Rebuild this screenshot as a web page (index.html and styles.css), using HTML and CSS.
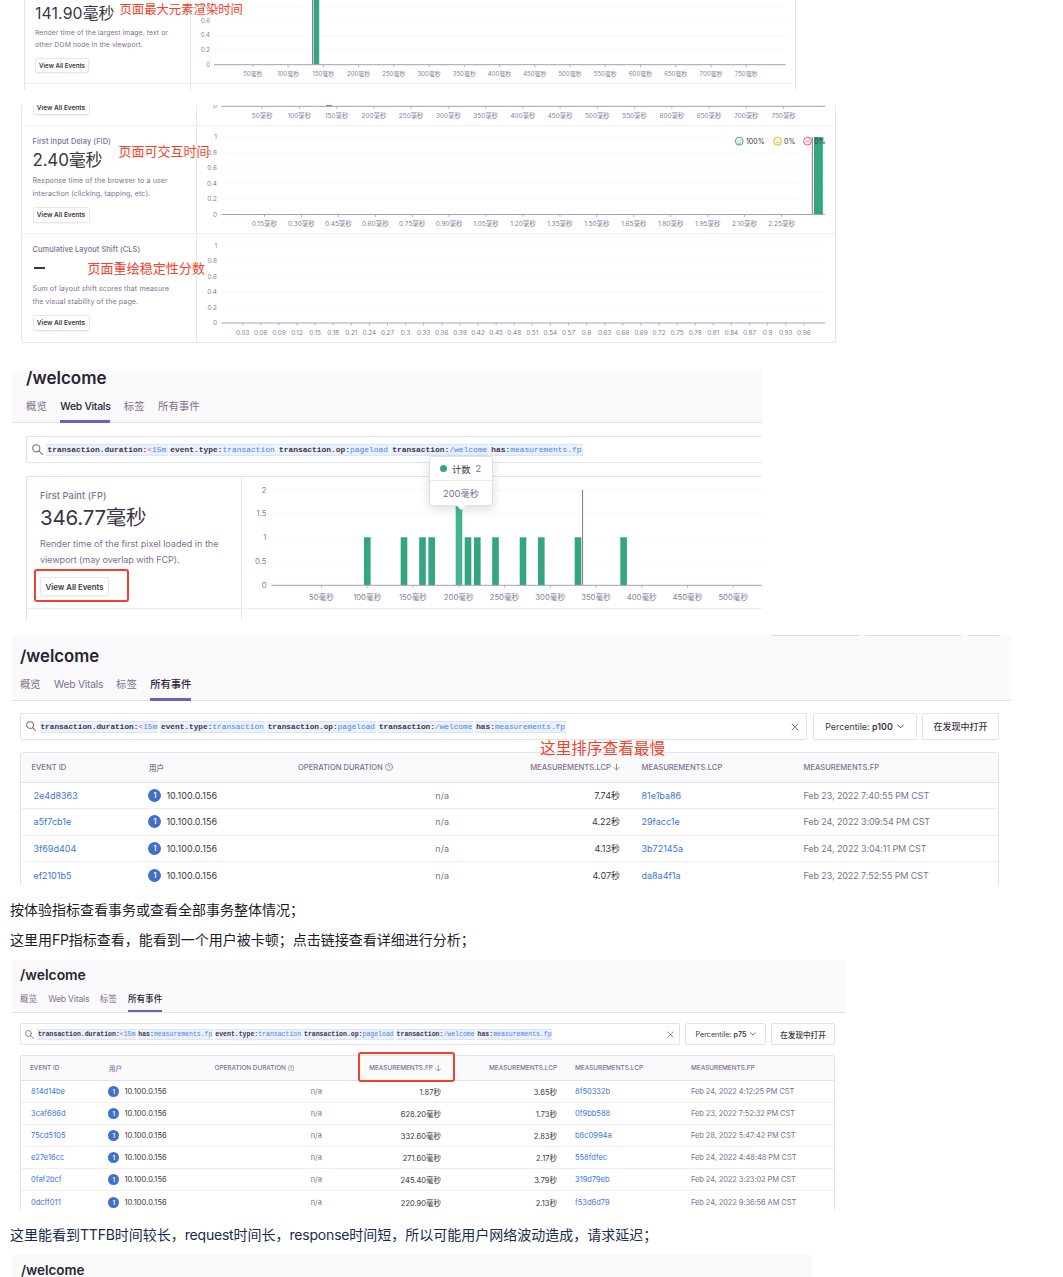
FILE: index.html
```html
<!DOCTYPE html>
<html lang="zh-CN">
<head>
<meta charset="utf-8">
<title>/welcome</title>
<link rel="stylesheet" href="styles.css">
</head>
<body>
<svg class="defs" width="0" height="0">
  <symbol id="search" viewBox="0 0 16 16"><g fill="none" stroke="currentColor" stroke-width="1.6" stroke-linecap="round"><circle cx="6.2" cy="6.2" r="5.2"/><path d="M10 10l5.2 5.2"/></g></symbol>
  <symbol id="close" viewBox="0 0 16 16"><path d="M2 2l12 12M14 2L2 14" fill="none" stroke="currentColor" stroke-width="1.8" stroke-linecap="round"/></symbol>
  <symbol id="chevron" viewBox="0 0 16 16"><path d="M1.5 4.5L8 11l6.500-6.500" fill="none" stroke="currentColor" stroke-width="2" stroke-linecap="round" stroke-linejoin="round"/></symbol>
  <symbol id="down" viewBox="0 0 16 16"><path d="M8 1v14M2 9l6 6 6-6" fill="none" stroke="currentColor" stroke-width="1.800" stroke-linecap="round" stroke-linejoin="round"/></symbol>
  <symbol id="help" viewBox="0 0 16 16"><g fill="none" stroke="currentColor" stroke-width="1.300" stroke-linecap="round"><circle cx="8" cy="8" r="7.200"/><path d="M5.700 6.300a2.300 2.300 0 1 1 3.200 2.200c-.700.300-.900.600-.900 1.300M8 11.800v.300"/></g></symbol>
</svg>

<figure class="shot lcp">
  <div class="row">
    <div class="vital">
      <div class="value">141.90毫秒</div>
      <p class="desc">Render time of the largest image, text or<br>other DOM node in the viewport.</p>
      <span class="btn">View All Events</span>
    </div>
    <svg class="chart" data-chart="lcp" viewBox="191 0 604 83"></svg>
  </div>
  <div class="row stub"><div class="vital"></div></div>
  <div class="note note-lcp">页面最大元素渲染时间</div>
</figure>

<figure class="shot fid">
  <div class="row cut">
    <div class="vital"><span class="btn">View All Events</span></div>
    <svg class="chart" data-chart="cut" viewBox="197 105 638 20"></svg>
  </div>
  <div class="row">
    <div class="vital">
      <div class="title">First Input Delay (FID)</div>
      <div class="value">2.40毫秒</div>
      <p class="desc">Response time of the browser to a user<br>interaction (clicking, tapping, etc).</p>
      <span class="btn">View All Events</span>
    </div>
    <svg class="chart" data-chart="fid" viewBox="197 126 638 107"></svg>
  </div>
  <div class="row last">
    <div class="vital">
      <div class="title">Cumulative Layout Shift (CLS)</div>
      <div class="value"><i class="dash"></i></div>
      <p class="desc">Sum of layout shift scores that measure<br>the visual stability of the page.</p>
      <span class="btn">View All Events</span>
    </div>
    <svg class="chart" data-chart="cls" viewBox="197 234 638 107"></svg>
  </div>
  <div class="note note-fid">页面可交互时间</div>
  <div class="note note-cls">页面重绘稳定性分数</div>
</figure>

<figure class="shot page fp">
  <header>
    <h1>/welcome</h1>
    <nav><span>概览</span><span class="on wv">Web Vitals</span><span>标签</span><span>所有事件</span></nav>
  </header>
  <div class="search"><svg class="mag"><use href="#search"/></svg><div class="query"><span><b>transaction.duration:</b><em>&lt;</em>15m</span><span><b>event.type:</b>transaction</span><span><b>transaction.op:</b>pageload</span><span><b>transaction:</b>/welcome</span><span><b>has:</b>measurements.fp</span></div></div>
  <div class="panel">
    <div class="row">
      <div class="vital">
        <div class="title">First Paint (FP)</div>
        <div class="value">346.77毫秒</div>
        <p class="desc">Render time of the first pixel loaded in the<br><span class="tight">viewport (may overlap with FCP).</span></p>
        <span class="btn">View All Events</span>
      </div>
      <svg class="chart" data-chart="fp" viewBox="242 477 520 131"></svg>
    </div>
    <div class="row stub"><div class="vital"></div></div>
  </div>
  <div class="mark mark-btn"></div>
  <div class="tooltip"><div class="tip-row"><i></i><strong>计数</strong><span>2</span></div><div class="tip-foot">200毫秒</div></div>
</figure>

<figure class="shot page events">
  <div class="cut-buttons"><i></i><i></i><i></i></div>
  <header>
    <h1>/welcome</h1>
    <nav><span>概览</span><span class="wv">Web Vitals</span><span>标签</span><span class="on">所有事件</span></nav>
  </header>
  <div class="bar">
    <div class="search"><svg class="mag"><use href="#search"/></svg><div class="query"><span><b>transaction.duration:</b><em>&lt;</em>15m</span><span><b>event.type:</b>transaction</span><span><b>transaction.op:</b>pageload</span><span><b>transaction:</b>/welcome</span><span><b>has:</b>measurements.fp</span></div><svg class="x"><use href="#close"/></svg></div>
    <div class="pick"><span class="lbl">Percentile: <b>p100</b></span><svg><use href="#chevron"/></svg></div>
    <div class="pick open">在发现中打开</div>
  </div>
  <div class="table">
    <div class="tr th"><span>EVENT ID</span><span>用户</span><span>OPERATION DURATION <svg><use href="#help"/></svg></span><span class="r">MEASUREMENTS.LCP <svg class="arrow"><use href="#down"/></svg></span><span>MEASUREMENTS.LCP</span><span>MEASUREMENTS.FP</span></div>
    <div class="tr"><a>2e4d8363</a><span class="user"><i>1</i>10.100.0.156</span><span class="r na">n/a</span><span class="r">7.74秒</span><a>81e1ba86</a><time>Feb 23, 2022 7:40:55 PM CST</time></div>
    <div class="tr"><a>a5f7cb1e</a><span class="user"><i>1</i>10.100.0.156</span><span class="r na">n/a</span><span class="r">4.22秒</span><a>29facc1e</a><time>Feb 24, 2022 3:09:54 PM CST</time></div>
    <div class="tr"><a>3f69d404</a><span class="user"><i>1</i>10.100.0.156</span><span class="r na">n/a</span><span class="r">4.13秒</span><a>3b72145a</a><time>Feb 24, 2022 3:04:11 PM CST</time></div>
    <div class="tr"><a>ef2101b5</a><span class="user"><i>1</i>10.100.0.156</span><span class="r na">n/a</span><span class="r">4.07秒</span><a>da8a4f1a</a><time>Feb 23, 2022 7:52:55 PM CST</time></div>
  </div>
  <div class="note note-sort">这里排序查看最慢</div>
</figure>

<p class="text">按体验指标查看事务或查看全部事务整体情况；</p>
<p class="text">这里用<span>FP</span>指标查看，能看到一个用户被卡顿；点击链接查看详细进行分析；</p>

<figure class="shot page events small">
  <header>
    <h1>/welcome</h1>
    <nav><span>概览</span><span class="wv">Web Vitals</span><span>标签</span><span class="on">所有事件</span></nav>
  </header>
  <div class="bar">
    <div class="search"><svg class="mag"><use href="#search"/></svg><div class="query"><span><b>transaction.duration:</b><em>&lt;</em>15m</span><span><b>has:</b>measurements.fp</span><span><b>event.type:</b>transaction</span><span><b>transaction.op:</b>pageload</span><span><b>transaction:</b>/welcome</span><span><b>has:</b>measurements.fp</span></div><svg class="x"><use href="#close"/></svg></div>
    <div class="pick"><span class="lbl">Percentile: <b>p75</b></span><svg><use href="#chevron"/></svg></div>
    <div class="pick open">在发现中打开</div>
  </div>
  <div class="table">
    <div class="tr th"><span>EVENT ID</span><span>用户</span><span>OPERATION DURATION <svg><use href="#help"/></svg></span><span class="r">MEASUREMENTS.FP <svg class="arrow"><use href="#down"/></svg></span><span class="r">MEASUREMENTS.LCP</span><span>MEASUREMENTS.LCP</span><span>MEASUREMENTS.FP</span></div>
    <div class="tr"><a>814d14be</a><span class="user"><i>1</i>10.100.0.156</span><span class="r na">n/a</span><span class="r">1.87秒</span><span class="r">3.65秒</span><a>8f50332b</a><time>Feb 24, 2022 4:12:25 PM CST</time></div>
    <div class="tr"><a>3caf686d</a><span class="user"><i>1</i>10.100.0.156</span><span class="r na">n/a</span><span class="r">628.20毫秒</span><span class="r">1.73秒</span><a>0f9bb588</a><time>Feb 23, 2022 7:52:32 PM CST</time></div>
    <div class="tr"><a>75cd5105</a><span class="user"><i>1</i>10.100.0.156</span><span class="r na">n/a</span><span class="r">332.60毫秒</span><span class="r">2.83秒</span><a>b8c0994a</a><time>Feb 28, 2022 5:47:42 PM CST</time></div>
    <div class="tr"><a>e27e16cc</a><span class="user"><i>1</i>10.100.0.156</span><span class="r na">n/a</span><span class="r">271.60毫秒</span><span class="r">2.17秒</span><a>558fdfec</a><time>Feb 24, 2022 4:48:48 PM CST</time></div>
    <div class="tr"><a>0faf2bcf</a><span class="user"><i>1</i>10.100.0.156</span><span class="r na">n/a</span><span class="r">245.40毫秒</span><span class="r">3.79秒</span><a>319d79eb</a><time>Feb 24, 2022 3:23:02 PM CST</time></div>
    <div class="tr"><a>0dcff011</a><span class="user"><i>1</i>10.100.0.156</span><span class="r na">n/a</span><span class="r">220.90毫秒</span><span class="r">2.13秒</span><a>f53d6d79</a><time>Feb 24, 2022 9:36:56 AM CST</time></div>
  </div>
  <div class="mark mark-fp"></div>
</figure>

<p class="text navy">这里能看到<span>TTFB</span>时间较长，<span>request</span>时间长，<span>response</span>时间短，所以可能用户网络波动造成，请求延迟；</p>

<figure class="shot page tail"><header><h1>/welcome</h1></header></figure>
<script src="charts.js"></script>
</body>
</html>
```
FILE: styles.css
```css
* { box-sizing: border-box; }
body { margin: 0; width: 1063px; height: 1277px; overflow: hidden; background: #fff; color: #2b2233; font-family: Inter, "Noto Sans CJK SC", sans-serif; }
.defs { position: absolute; }
p, h1, figure { margin: 0; }
.shot { position: relative; overflow: hidden; }
.row { display: flex; border-bottom: 1px solid #efedf3; }
.vital { flex: none; border-right: 1px solid #e8e5ee; color: #80708f; white-space: nowrap; }
.chart { flex: none; display: block; overflow: hidden; }
.chart text { fill: #8b7b9b; font-family: Inter, "Noto Sans CJK SC", sans-serif; }
.value { color: #3e3446; }
.title { font-weight: 500; line-height: 10px; }
.btn { display: flex; align-items: center; justify-content: center; color: #3e3446; font-weight: 600; border: 1px solid #e8e5ee; border-radius: 2px; box-shadow: 0 1px 1px rgba(40, 30, 50, .04); }
.note { position: absolute; color: #f4412c; white-space: nowrap; line-height: 20px; }
.mark { position: absolute; border: 2px solid #f0412c; border-radius: 3px; }

.lcp { margin-left: 24px; width: 772px; height: 90px; border: solid #e8e5ee; border-width: 0 1px; }
.lcp .row { height: 84px; }
.lcp .vital { width: 166px; padding: 4px 0 0 10px; }
.lcp .value { font-size: 15.8px; line-height: 20px; letter-spacing: .12px; }
.lcp .desc { font-size: 6.8px; line-height: 12px; margin: 3px 0 7px; letter-spacing: .1px; }
.lcp .btn { width: 54px; height: 15px; font-size: 6.2px; }
.lcp .chart { width: 604px; height: 83px; }
.note-lcp { left: 94.5px; top: 0; font-size: 12.35px; }

.fid { margin: 15px 0 0 21px; width: 815px; height: 238px; border: solid #e8e5ee; border-width: 0 1px 1px; border-radius: 0 0 3px 3px; }
.fid .vital { width: 175px; padding: 11px 0 0 10.5px; }
.fid .row { height: 108px; }
.fid .row.cut { height: 21px; }
.fid .row.last { border: 0; }
.fid .cut .vital { padding-top: 0; }
.fid .cut .btn { margin-top: -6px; padding-top: 1px; }
.fid .title { font-size: 7.4px; letter-spacing: .08px; }
.fid .value { font-size: 17px; line-height: 20px; margin-top: 3px; letter-spacing: -.2px; }
.fid .desc { font-size: 7.1px; line-height: 13px; margin: 4px 0 7px; letter-spacing: .1px; }
.fid .btn { width: 57px; height: 16px; font-size: 6.5px; }
.fid .chart { width: 638px; height: 107px; }
.fid .cut .chart { height: 20px; }
.dash { display: inline-block; width: 11px; height: 2px; margin-left: 1px; background: #3e3446; vertical-align: 5px; }
.note-fid { left: 96.5px; top: 36px; font-size: 13px; }
.note-cls { left: 65.5px; top: 152.500px; font-size: 13.05px; }

.page { margin-left: 12px; }
.page header { background: #faf9fb; border-bottom: 1px solid #e5e1ea; }
.page h1 { font-weight: 600; white-space: nowrap; }
.page nav { display: flex; color: #80708f; white-space: nowrap; }
.page nav .on { color: #2b2233; font-weight: 500; border-bottom: 3px solid #6c5fc7; }
.search { display: flex; align-items: center; border: 1px solid #e5e1ea; border-radius: 2px; }
.mag, .x { flex: none; color: #80708f; }
.query { display: flex; font-family: "Liberation Mono", monospace; color: #4a83e8; white-space: pre; }
.query span { background: #eaf1fd; border: solid #d9e4f8; border-width: 1px 0; }
.query b { color: #3e3446; }
.query em { color: #f0427c; font-style: normal; }

.fp { margin-top: 27px; width: 750px; height: 250px; }
.fp header { display: flow-root; height: 53px; padding-left: 14px; }
.fp h1 { font-size: 17px; line-height: 22px; margin-top: -3px; }
.fp nav { font-size: 10.4px; line-height: 20px; gap: 13.5px; padding-top: 8px; }
.fp nav span { height: 26px; }
.fp nav .wv { letter-spacing: -.27px; width: 50px; }
.fp .search { margin: 13px 0 0 14px; height: 27px; border-right: 0; padding-left: 4.5px; }
.fp .mag { width: 11px; height: 11px; }
.fp .query { margin-left: 3.5px; font-size: 7.92px; line-height: 10px; gap: 1.2px; }
.fp .query span { padding: 0 1.5px; height: 12px; }
.panel { margin: 13px 0 0 14px; border: solid #e5e1ea; border-width: 1px 0 0 1px; border-radius: 3px 0 0; }
.fp .row { height: 132px; }
.fp .vital { width: 215px; padding: 14px 0 0 13px; }
.fp .title { font-size: 9.3px; letter-spacing: .08px; }
.fp .value { font-size: 20.5px; line-height: 26px; margin-top: 4px; letter-spacing: -.22px; }
.fp .desc { font-size: 9.1px; line-height: 16px; margin: 5px 0 9px; letter-spacing: -.02px; }
.fp .desc .tight { letter-spacing: -.1px; }
.fp .btn { width: 69px; height: 19px; font-size: 7.8px; }
.fp .chart { width: 520px; height: 131px; }
.mark-btn { left: 22px; top: 199px; width: 95px; height: 33px; }
.tooltip { position: absolute; left: 417px; top: 86px; width: 64px; height: 50px; background: #fff; border: 1px solid #e2dee8; border-radius: 3px; box-shadow: 0 3px 10px rgba(40, 30, 50, .16); color: #80708f; font-size: 9.3px; }
.tooltip::after { content: ""; position: absolute; left: 26px; top: 48px; border: solid transparent; border-top-color: #fff; border-width: 5px 5px 0; }
.tip-row { display: flex; align-items: center; height: 24px; padding-left: 10px; border-bottom: 1px solid #ebe8f0; }
.tip-row i { width: 7px; height: 7px; border-radius: 50%; background: #33a583; }
.tip-row strong { margin: 0 5px; font-weight: 400; color: #3e3446; }
.tip-foot { text-align: center; line-height: 25px; }

.events { margin-top: 15px; width: 999px; height: 250px; }
.events header { height: 66px; padding: 11px 0 0 8px; }
.cut-buttons { position: absolute; top: 0; left: 759px; display: flex; gap: 7px; }
.cut-buttons i { width: 88px; height: 1px; background: #dcd8e2; }
.cut-buttons i:nth-child(2) { width: 95px; }
.cut-buttons i:nth-child(3) { width: 31px; }
.events h1 { font-size: 16.7px; line-height: 21px; }
.events nav { font-size: 10.3px; line-height: 20px; gap: 13.5px; padding-top: 7px; }
.events nav span { height: 27px; }
.events nav .wv { letter-spacing: -.25px; width: 48.5px; }
.bar { display: flex; gap: 5.5px; padding: 12px 12px 0 8px; }
.bar .search { flex: 1; height: 27px; padding: 0 7px 0 4.5px; }
.events .mag { width: 10.5px; height: 10.5px; }
.events .query { margin-left: 3.5px; font-size: 7.79px; line-height: 10px; gap: 2.1px; }
.events .query span { padding: 0 .9px; height: 12px; }
.events .x { width: 8px; height: 8px; margin-left: auto; }
.pick { display: flex; align-items: center; justify-content: center; gap: 4px; width: 104px; border: 1px solid #e5e1ea; border-radius: 2px; font-size: 8.9px; color: #3e3446; white-space: nowrap; }
.pick svg { width: 7px; height: 7px; }
.pick b { font-weight: 600; }
.pick.open { width: 77px; font-weight: 500; font-size: 9px; }
.table { margin: 12px 12px 0 8px; border: 1px solid #e5e1ea; border-bottom: 0; border-radius: 3px 3px 0 0; }
.tr { display: grid; grid-template-columns: 117.6px 149px 151px 171px 161.5px 1fr; align-items: center; height: 26.6px; padding-left: 10.4px; border-bottom: 1px solid #efedf3; font-size: 9px; color: #3e3446; white-space: nowrap; }
.tr > :nth-child(5) { margin-left: 21.5px; }
.tr > :nth-child(6) { margin-left: 22px; }
.tr a { color: #3c74dd; }
.tr a:first-child { padding-left: 2px; }
.tr time, .tr .na { color: #80708f; }
.tr time { letter-spacing: -.1px; }
.r { text-align: right; }
.tr.th { height: 29.5px; background: #faf9fb; font-size: 7.6px; font-weight: 500; color: #80708f; border-color: #e5e1ea; }
.th svg { width: 8px; height: 8px; vertical-align: -1px; }
.th .arrow { width: 7px; }
.user { display: flex; align-items: center; gap: 5px; margin-left: -.6px; letter-spacing: .05px; }
.user i { width: 13px; height: 13px; border-radius: 50%; background: #4070cc; color: #fff; font: 600 7px/13px Inter, sans-serif; text-align: center; }
.note-sort { left: 528px; top: 104px; font-size: 15.65px; }

.text { margin-left: 10px; font-size: 14px; line-height: 30px; height: 30px; color: #1f1a29; white-space: nowrap; }
.text span { letter-spacing: -.2px; }
.events + .text { margin-top: 10px; }
.text.navy { color: #172b4d; margin-top: 10px; }

.small { margin-top: 5px; width: 833px; }
.small header { height: 53px; padding-top: 6px; }
.small h1 { font-size: 13.9px; line-height: 19px; }
.small nav { font-size: 8.6px; line-height: 16px; gap: 11px; padding-top: 6px; }
.small nav span { height: 21px; }
.small nav .wv { letter-spacing: -.2px; width: 40.5px; }
.small nav .on { border-bottom-width: 2px; }
.small .bar { padding: 10px 10px 0 8px; gap: 5px; }
.small .search { height: 22px; padding: 0 5px 0 4px; }
.small .mag { width: 9px; height: 9px; }
.small .query { margin-left: 3.2px; font-size: 6.5px; line-height: 9px; gap: 1.5px; }
.small .query span { padding: 0 .7px; height: 11px; }
.small .x { width: 7px; height: 7px; }
.small .pick { width: 81px; font-size: 7.2px; gap: 3px; }
.small .pick svg { width: 6px; height: 6px; }
.small .pick.open { width: 64px; font-size: 7.6px; }
.small .table { margin: 10px 10px 0 8px; }
.small .tr { grid-template-columns: 79px 105.5px 107.5px 119px 116px 134px 1fr; height: 22.1px; padding-left: 9px; font-size: 7.5px; }
.small .tr.th { height: 25px; font-size: 6.4px; }
.small .tr > :nth-child(5) { margin-left: 0; }
.small .tr > :nth-child(6) { margin-left: 18px; }
.small .tr a:first-child { padding-left: 1px; }
.small .tr > :nth-child(7) { margin-left: 0; }
.small .th svg { width: 6.5px; height: 6.5px; }
.small .user i { width: 11px; height: 11px; font-size: 6px; line-height: 11px; }
.mark-fp { left: 346px; top: 92px; width: 97px; height: 30px; }

.tail { margin-top: 5px; width: 800px; height: 22px; }
.tail header { height: 40px; padding: 5px 0 0 9px; }
.tail h1 { font-size: 13.4px; line-height: 20px; }
```
FILE: charts.js
```js
const NS = "http://www.w3.org/2000/svg";

function add(svg, name, attrs, text) {
  const el = document.createElementNS(NS, name);
  for (const key in attrs) el.setAttribute(key, attrs[key]);
  if (text !== undefined) el.textContent = text;
  svg.appendChild(el);
  return el;
}

const series = (count, step, digits, unit) =>
  Array.from({ length: count }, (_, i) => {
    const n = (i + 1) * step;
    return (digits === null ? String(+n.toFixed(2)) : n.toFixed(digits)) + unit;
  });

const fifths = ["0", "0.2", "0.4", "0.6", "0.8", "1"];

const charts = {
  lcp: { x0: 214, x1: 785.5, y: 64.7, up: 14.7, ys: fifths.slice(0, 5), yx: 210, first: 252.9, step: 35.24, labels: series(15, 50, 0, "毫秒"), ly: 73.5, size: 6,
    bars: [[316.4, 5.6, -10]], line: [312.6, -10] },
  cut: { x0: 221.5, x1: 825, y: 106.3, up: 15.5, ys: ["0"], yx: 217, first: 262.2, step: 37.24, labels: series(15, 50, 0, "毫秒"), ly: 115.7, size: 6.4,
    bars: [[329, 6, 105]] },
  fid: { x0: 221.5, x1: 825, y: 214.5, up: 15.5, ys: fifths, yx: 217, first: 264.5, step: 36.93, labels: series(15, 0.15, 2, "毫秒"), ly: 224, size: 6.5,
    bars: [[818.4, 8.8, 137]], line: [812.3, 137], legend: true },
  cls: { x0: 221.5, x1: 825, y: 323, up: 15.5, ys: fifths, yx: 217, first: 242.7, step: 18.1, labels: series(32, 0.03, null, ""), ly: 332.5, size: 6.4, bars: [] },
  fp: { x0: 271.5, x1: 762, y: 585.3, up: 23.8, ys: ["0", "0.5", "1", "1.5", "2"], yx: 266.5, first: 321.5, step: 45.75, labels: series(10, 50, 0, "毫秒"), ly: 597, size: 7.7,
    bars: [367.3, 404, 422.5, 431.7, 468, 477.3, 495.5, 523, 541.3, 578, 623.6].map(x => [x, 6.6, 537.3]).concat([[459, 6.6, 490, "#45b595"]]), line: [582.6, 490] }
};

function face(svg, x, y, color, mouth) {
  add(svg, "circle", { cx: x, cy: y, r: 3.9, fill: "none", stroke: color, "stroke-width": 1 });
  add(svg, "circle", { cx: x - 1.4, cy: y - 1, r: 0.5, fill: color });
  add(svg, "circle", { cx: x + 1.4, cy: y - 1, r: 0.5, fill: color });
  add(svg, "path", { d: `M${x - 2} ${y + 1.3}q2 ${mouth} 4 0`, fill: "none", stroke: color, "stroke-width": 0.8 });
}

document.querySelectorAll("[data-chart]").forEach(svg => {
  const c = charts[svg.dataset.chart];
  c.ys.forEach((label, i) => {
    const y = c.y - i * c.up;
    if (i) add(svg, "path", { d: `M${c.x0} ${y}H${c.x1}`, stroke: "#f8f7fa", "stroke-width": 1 });
    add(svg, "text", { x: c.yx, y: y + c.size * 0.33, "font-size": c.size, "text-anchor": "end" }, label);
  });
  c.bars.forEach(([x, w, top, color]) => add(svg, "rect", { x: x - w / 2, y: top, width: w, height: c.y - top, fill: color || "#33a583" }));
  if (c.line) add(svg, "path", { d: `M${c.line[0]} ${c.line[1]}V${c.y}`, stroke: "#80758a", "stroke-width": 1 });
  add(svg, "path", { d: `M${c.x0} ${c.y}H${c.x1}`, stroke: "#a99fb5", "stroke-width": 1 });
  c.labels.forEach((label, i) => {
    const x = c.first + i * c.step;
    add(svg, "path", { d: `M${x} ${c.y}v2.5`, stroke: "#a99fb5", "stroke-width": 0.8 });
    add(svg, "text", { x, y: c.ly + c.size * 0.36, "font-size": c.size, "text-anchor": "middle" }, label);
  });
  if (c.legend) {
    [[739.3, "#33a583", 2.2, 746, "100%"], [777.5, "#f5b000", 0, 784, "0%"], [807.5, "#f55459", -2.2, 814.3, "0%"]].forEach(([x, color, mouth, tx, label]) => {
      face(svg, x, 141.2, color, mouth);
      add(svg, "text", { x: tx, y: 143.7, "font-size": 7, style: "fill:#3e3446" }, label);
    });
  }
});
```
